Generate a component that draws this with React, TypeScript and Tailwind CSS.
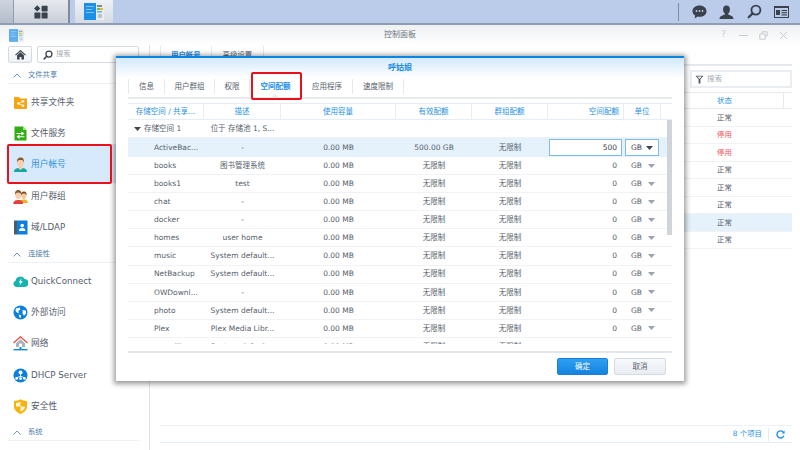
import type { ReactNode } from "react";

const font = "font-['DejaVu_Sans','Noto_Sans_CJK_SC',sans-serif]";

function CpIcon({ className }: { className: string }) {
  return (
    <svg viewBox="0 0 20 17" className={className}>
      <rect x="0" y="0" width="12" height="17" fill="#1c8fe6" />
      <rect x="2" y="3" width="8" height="1" fill="#7cc4f5" />
      <rect x="2" y="6" width="6" height="1" fill="#7cc4f5" />
      <rect x="2" y="9" width="8" height="1" fill="#7cc4f5" />
      <rect x="12" y="0" width="8" height="17" fill="#e9edf0" />
      <rect x="13" y="2" width="5" height="2" fill="#7a8a96" />
      <rect x="13" y="5" width="3" height="2" fill="#6cc04a" />
      <rect x="16" y="5" width="3" height="2" fill="#e9b93c" />
      <rect x="13" y="8" width="5" height="1.5" fill="#6aaedb" />
      <circle cx="16" cy="13" r="2.2" fill="#b8c2ca" />
    </svg>
  );
}

function Magnifier({ className, color = "#39424d" }: { className: string; color?: string }) {
  return (
    <svg viewBox="0 0 16 16" className={className}>
      <circle cx="9.5" cy="6.5" r="4.8" fill="none" stroke={color} strokeWidth="2" />
      <path d="M6 10 L1.8 14.2" stroke={color} strokeWidth="2.4" strokeLinecap="round" />
    </svg>
  );
}

const sideIcons: Record<string, ReactNode> = {
  folder: (
    <svg viewBox="0 0 15 15" className="w-[15px] h-[15px]">
      <path d="M1 2 h5 l1.5 1.5 H14 V13 a1 1 0 0 1 -1 1 H2 a1 1 0 0 1 -1 -1 Z" fill="#f5a612" />
      <circle cx="5.5" cy="8.5" r="1.2" fill="#fff" />
      <circle cx="10" cy="6.2" r="1.2" fill="#fff" />
      <circle cx="10" cy="10.8" r="1.2" fill="#fff" />
      <path d="M5.5 8.5 L10 6.2 M5.5 8.5 L10 10.8" stroke="#fff" strokeWidth="0.8" />
    </svg>
  ),
  file: (
    <svg viewBox="0 0 15 15" className="w-[15px] h-[15px]">
      <path d="M1.5 0.5 H10 L13.5 4 V14.5 H1.5 Z" fill="#2fae12" />
      <path d="M10 0.5 L13.5 4 H10 Z" fill="#a5e08a" />
      <path d="M3.5 7.5 H10 M8.5 6 L10.5 7.5 L8.5 9" stroke="#fff" strokeWidth="1.1" fill="none" />
      <path d="M11.5 10.8 H5 M6.5 9.3 L4.5 10.8 L6.5 12.3" stroke="#fff" strokeWidth="1.1" fill="none" />
    </svg>
  ),
  user: (
    <svg viewBox="0 0 15 15" className="w-[15px] h-[15px]">
      <path d="M1 15 C1 11.5 4 11 7.5 11 C11 11 14 11.5 14 15 Z" fill="#14a8a0" />
      <path d="M5.8 10 H9.2 V12 L7.5 13 L5.8 12 Z" fill="#f3c8a4" />
      <ellipse cx="7.5" cy="5.6" rx="3.3" ry="4.4" fill="#f6cfae" />
      <path d="M4 5.5 C3.6 1.6 6 0.5 7.5 0.5 C9.5 0.5 11.4 1.8 11 5.5 C10.4 3.6 9.6 3 7.5 3 C5.4 3 4.6 3.6 4 5.5 Z" fill="#8a5a2c" />
    </svg>
  ),
  group: (
    <svg viewBox="0 0 15 15" className="w-[15px] h-[15px]">
      <path d="M7 14 C7 11 9 10.5 11 10.5 C13 10.5 14.8 11 14.8 14 Z" fill="#eeb21c" />
      <ellipse cx="10.8" cy="6.6" rx="2.6" ry="3.4" fill="#f2c9a6" />
      <path d="M8 6.5 C7.6 3 10 2.4 11 2.4 C12.4 2.4 14 3.4 13.5 6.5 C13 5 12 4.6 10.8 4.6 C9.6 4.6 8.6 5 8 6.5 Z" fill="#7a4a22" />
      <path d="M0.3 15 C0.3 11.5 3 11 5.5 11 C8 11 10 11.5 10 15 Z" fill="#e2423c" />
      <ellipse cx="5.2" cy="6" rx="3" ry="4" fill="#f6cfae" />
      <path d="M2 6 C1.6 1.8 4 1 5.2 1 C7 1 8.8 2 8.4 6 C8 4.2 7 3.4 5.2 3.4 C3.4 3.4 2.4 4.2 2 6 Z" fill="#8a5a2c" />
    </svg>
  ),
  book: (
    <svg viewBox="0 0 15 15" className="w-[15px] h-[15px]">
      <rect x="1" y="0.5" width="3" height="14" fill="#4d5a68" />
      <rect x="4" y="0.5" width="10.5" height="14" fill="#0b80de" />
      <circle cx="9.2" cy="5.6" r="1.8" fill="#fff" />
      <path d="M6 11 C6 8.6 7.6 8 9.2 8 C10.8 8 12.4 8.6 12.4 11 Z" fill="#fff" />
    </svg>
  ),
  quick: (
    <svg viewBox="0 0 15 15" className="w-[15px] h-[15px]">
      <path d="M3.5 13 A3.2 3.2 0 0 1 2.6 6.8 A4.8 4.8 0 0 1 11.5 5 A4 4 0 0 1 11.5 13 Z" fill="#15b3b0" />
      <path d="M8.4 4 L5.8 8.6 H7.6 L6.6 11.6 L9.8 7.2 H7.9 Z" fill="#fff" />
    </svg>
  ),
  globe: (
    <svg viewBox="0 0 15 15" className="w-[15px] h-[15px]">
      <circle cx="7.5" cy="7.5" r="7" fill="#0b80de" />
      <path d="M3 3.6 L6.6 2.4 L7.4 4.6 L5.4 6 L5.8 8.2 L4.2 7.8 L2.4 5.8 Z" fill="#fff" />
      <path d="M9.6 5 L12.8 5.6 L13 8.6 L11 10.8 L9.6 8.6 Z" fill="#fff" />
      <path d="M5.8 9.6 L8 10.2 L7.8 13 L6.4 12.6 Z" fill="#fff" />
    </svg>
  ),
  net: (
    <svg viewBox="0 0 15 15" className="w-[15px] h-[15px]">
      <path d="M0.6 7 L7.5 0.8 L14.4 7" fill="none" stroke="#e4534a" strokeWidth="1.4" />
      <path d="M3 7.2 L7.5 3.2 L12 7.2 V11 H3 Z" fill="#a7b3bd" />
      <rect x="6" y="7.6" width="3" height="3.4" fill="#fff" />
      <rect x="6.5" y="11" width="2" height="2" fill="#1487de" />
      <rect x="0.5" y="13" width="14" height="1.4" fill="#1487de" />
    </svg>
  ),
  dhcp: (
    <svg viewBox="0 0 15 15" className="w-[15px] h-[15px]">
      <circle cx="7.5" cy="7.5" r="7" fill="#0b80de" />
      <circle cx="7.5" cy="4.6" r="2" fill="#fff" />
      <path d="M7.5 6 V9.4 M3.8 9.8 L7.5 8 L11.2 9.8" stroke="#fff" strokeWidth="0.8" fill="none" />
      <circle cx="3.6" cy="10.4" r="1.4" fill="#fff" />
      <circle cx="7.5" cy="10.6" r="1.4" fill="#fff" />
      <circle cx="11.4" cy="10.4" r="1.4" fill="#fff" />
    </svg>
  ),
  shield: (
    <svg viewBox="0 0 15 15" className="w-[15px] h-[15px]">
      <path d="M1 2 C3.5 2 5.5 1.4 7.5 0.3 C9.5 1.4 11.5 2 14 2 V7.5 C14 11 11 13.6 7.5 15 C4 13.6 1 11 1 7.5 Z" fill="#f6b20e" />
      <path d="M7.5 2.8 V7.5 H3 V3.9 C4.8 3.8 6.2 3.4 7.5 2.8 Z" fill="#fff6d8" />
      <path d="M7.5 7.5 H12 C12 10 10 11.6 7.5 12.8 Z" fill="#fff6d8" />
    </svg>
  ),
};

type SideItem = { icon: string; label: string; active?: boolean };

function SectionHead({ label, className }: { label: string; className: string }) {
  return (
    <div className={`flex items-center gap-[7px] pl-[5px] pt-[3px] border-b border-[#eef1f5] text-[7.3px] text-[#4b7ba8] ${className}`}>
      <svg viewBox="0 0 8 5" className="w-[8px] h-[5px]">
        <path d="M0.5 4.5 L4 1 L7.5 4.5" fill="none" stroke="#5f8db8" strokeWidth="0.9" />
      </svg>
      {label}
    </div>
  );
}

function SideRow({ icon, label, active }: SideItem) {
  return (
    <div className="relative flex items-center h-[31.2px] pl-[5px] pt-[2px] gap-[3px]">
      {active && <div className="absolute inset-x-0 -top-[4px] -bottom-[3px] bg-[#d7eafb]" />}
      <div className="relative">{sideIcons[icon]}</div>
      <span className={`relative text-[8.7px] ${active ? "text-[#2f8fdc]" : "text-[#55606b]"}`}>{label}</span>
    </div>
  );
}

function Sidebar() {
  return (
    <aside className="w-[150px] shrink-0 border-r border-[#dfe3e8] pl-[8px] pr-[10px] pt-[1px]">
      <div className="flex gap-[5px] h-[17px]">
        <div className="w-[24px] flex items-center justify-center rounded-[2px] border border-[#d5dae0] bg-gradient-to-b from-white to-[#eef1f4]">
          <svg viewBox="0 0 12 11" className="w-[11px] h-[10px]">
            <path d="M0.5 5.6 L6 0.8 L11.5 5.6" fill="none" stroke="#3d4650" strokeWidth="1.3" />
            <path d="M2.2 5.8 L6 2.6 L9.8 5.8 V10.5 H7 V7.6 H5 V10.5 H2.2 Z" fill="#3d4650" />
          </svg>
        </div>
        <div className="flex-1 flex items-center gap-[3px] pl-[5px] border border-[#d5dae0] rounded-[2px] text-[7.3px] text-[#a5acb4]">
          <Magnifier className="w-[10px] h-[10px]" />
          搜索
        </div>
      </div>
      <SectionHead label="文件共享" className="h-[19px] mt-[2px] mb-[2px]" />
      {[
        { icon: "folder", label: "共享文件夹" },
        { icon: "file", label: "文件服务" },
        { icon: "user", label: "用户帐号", active: true },
        { icon: "group", label: "用户群组" },
        { icon: "book", label: "域/LDAP" },
      ].map((i) => (
        <SideRow key={i.label} {...i} />
      ))}
      <SectionHead label="连接性" className="h-[18px] mt-[3px] mb-[2px]" />
      {[
        { icon: "quick", label: "QuickConnect" },
        { icon: "globe", label: "外部访问" },
        { icon: "net", label: "网络" },
        { icon: "dhcp", label: "DHCP Server" },
        { icon: "shield", label: "安全性" },
      ].map((i) => (
        <SideRow key={i.label} {...i} />
      ))}
      <SectionHead label="系统" className="h-[18px] mt-[2px]" />
    </aside>
  );
}

const statusRows = ["正常", "停用", "停用", "正常", "正常", "正常", "正常", "正常"];

function UserPanel() {
  return (
    <main className="flex-1 min-w-0 flex flex-col pl-[10px] pr-[8px] pt-[1px] text-[7.4px]">
      <div className="flex h-[20px] border-b-2 border-[#e6e9ed] shrink-0">
        <div className="border-l border-[#e6e9ed] px-[10px] pt-[3px] font-bold text-[#1c8fe6]">用户帐号</div>
        <div className="border-x border-[#e6e9ed] px-[11px] pt-[3px] text-[#55606b]">高级设置</div>
      </div>
      <div className="h-[26px] flex items-center justify-end shrink-0">
        <div className="w-[102px] h-[18px] flex items-center gap-[3px] pl-[3px] border-2 border-[#eaedf1] text-[#a5acb4]">
          <svg viewBox="0 0 10 10" className="w-[9px] h-[9px]">
            <path d="M0.5 0.8 H9.5 L6 4.6 V9.5 H4 V4.6 Z M2.4 1.8 L4.8 4.2 H5.2 L7.6 1.8 Z" fill="#4a535d" fillRule="evenodd" />
          </svg>
          搜索
        </div>
      </div>
      <div className="h-[17px] flex items-center border-y border-[#e6e9ed] shrink-0">
        <div className="ml-auto w-[66px] flex justify-start text-[#1c8fe6]">状态</div>
        <div className="w-[9px] h-full border-l border-[#e6e9ed]" />
      </div>
      <div className="flex-1">
        {statusRows.map((s, i) => (
          <div
            key={i}
            className={`h-[17.5px] flex items-center border-b border-[#f0f2f5] ${i === 6 ? "bg-[#e5f2fc]" : ""}`}
          >
            <div className={`ml-[557px] ${s === "停用" ? "text-[#f0525a]" : "text-[#55606b]"}`}>{s}</div>
          </div>
        ))}
      </div>
      <div className="h-[18px] mb-[7px] flex items-center justify-end border-y border-[#eef1f5] border-b-[#e2edf7] text-[#1c8fe6] shrink-0">
        <span className="pr-[6px]">8 个项目</span>
        <div className="h-[13px] w-[24px] flex items-center justify-center border-l border-[#e6e9ed]">
          <svg viewBox="0 0 10 10" className="w-[9px] h-[9px]">
            <path d="M8.6 3 A4 4 0 1 0 8.8 6.4" fill="none" stroke="#1c8fe6" strokeWidth="1.5" />
            <path d="M9.6 0.6 V4 H6.2 Z" fill="#1c8fe6" />
          </svg>
        </div>
      </div>
    </main>
  );
}

const quotaRows = [
  ["books", "图书管理系统"],
  ["books1", "test"],
  ["chat", "-"],
  ["docker", "-"],
  ["homes", "user home"],
  ["music", "System default..."],
  ["NetBackup", "System default..."],
  ["OWDownl...", "-"],
  ["photo", "System default..."],
  ["Plex", "Plex Media Libr..."],
];

const cols = "grid grid-cols-[76px_77px_115px_76px_76px_76px_37px_11px]";

function Caret({ dark }: { dark?: boolean }) {
  return (
    <svg viewBox="0 0 7 4" className="w-[7px] h-[4px]">
      <path d="M0 0 H7 L3.5 4 Z" fill={dark ? "#3d4650" : "#9aa3ac"} />
    </svg>
  );
}

function QuotaDialog() {
  const heads = ["存储空间 / 共享...", "描述", "使用容量", "有效配额", "群组配额", "空间配额", "单位"];
  const tabs = ["信息", "用户群组", "权限", "空间配额", "应用程序", "速度限制"];
  const tabW = ["w-[36px]", "w-[50px]", "w-[35px]", "w-[52px]", "w-[51px]", "w-[51px]"];
  return (
    <div className="absolute left-[116px] top-[56px] w-[568px] h-[325px] bg-white border-t-2 border-[#0a86e0] shadow-[0_1px_5px_2px_rgba(0,0,0,0.4)] text-[7.5px] text-[#55606b]">
      <div className="h-[20px] flex items-center justify-center font-bold text-[8px] text-[#1c8fe6] bg-gradient-to-b from-[#d3e9fb] to-white">
        呼姑娘
      </div>
      <div className="mx-[12px]">
        <div className="relative flex h-[19px] border-b-2 border-[#e8eaed] box-content">
          {tabs.map((t, i) => (
            <div
              key={t}
              className={`${tabW[i]} flex items-center justify-center border-l border-[#e6e9ed] h-[15px] mt-[1px] ${
                i === 3 ? "font-bold text-[#1c8fe6]" : ""
              }`}
            >
              {t}
            </div>
          ))}
          <div className="w-0 h-[15px] mt-[1px] border-l border-[#e6e9ed]" />
          <div className="absolute left-[144px] bottom-0 w-[6px] h-[3px] bg-[#e8eaed] [clip-path:polygon(50%_0,100%_100%,0_100%)]" />
        </div>
        <div className={`${cols} h-[17px] mt-[4px] border-y border-[#e6edf5] text-[#2a92e2]`}>
          {heads.map((h, i) => (
            <div
              key={h}
              className={`flex items-center border-r border-[#e6edf5] ${
                i === 5 ? "justify-end pr-[4px]" : "justify-center"
              }`}
            >
              {h}
            </div>
          ))}
        </div>
        <div className="relative h-[224px] overflow-hidden">
          <div className="h-[18px] flex items-center border-b border-[#f0f2f5]">
            <div className="w-[16px] flex justify-center pl-[2px]">
              <Caret dark />
            </div>
            <span className="w-[60px]">存储空间 1</span>
            <span className="w-[77px] text-center">位于 存储池 1, S...</span>
          </div>
          <div className={`${cols} h-[19px] items-center bg-[#e5f2fc]`}>
            <div className="pl-[26px]">ActiveBac...</div>
            <div className="text-center">-</div>
            <div className="text-center">0.00 MB</div>
            <div className="text-center">500.00 GB</div>
            <div className="text-center">无限制</div>
            <div className="ml-[1px] mr-[2px] h-[17px] flex items-center justify-end pr-[4px] bg-white border border-[#7fbbe9] text-[#3d4650]">
              500
            </div>
            <div className="ml-[1px] mr-[2px] h-[17px] flex items-center justify-between pl-[5px] pr-[5px] bg-white border border-[#7fbbe9] text-[#3d4650]">
              GB
              <Caret dark />
            </div>
          </div>
          {quotaRows.map(([name, desc]) => (
            <div key={name} className={`${cols} h-[18.1px] items-center border-b border-[#f0f2f5]`}>
              <div className="pl-[26px]">{name}</div>
              <div className="text-center">{desc}</div>
              <div className="text-center">0.00 MB</div>
              <div className="text-center">无限制</div>
              <div className="text-center">无限制</div>
              <div className="text-right pr-[7px]">0</div>
              <div className="flex items-center justify-between pl-[7px] pr-[6px]">
                GB
                <Caret />
              </div>
            </div>
          ))}
          <div className={`${cols} h-[18.1px] items-center`}>
            <div className="pl-[26px]">surveillance</div>
            <div className="text-center">System default...</div>
            <div className="text-center">0.00 MB</div>
            <div className="text-center">无限制</div>
            <div className="text-center">无限制</div>
          </div>
          <div className="absolute right-0 top-0 w-[5px] h-[115px] bg-[#cfd4da]" />
        </div>
        <div className="h-[9px] border-b-2 border-[#e3e6ea]" />
      </div>
      <div className="flex justify-end gap-[6px] pr-[18px] pt-[5px]">
        <div className="w-[51px] h-[17px] flex items-center justify-center rounded-[2px] bg-gradient-to-b from-[#2f9ff0] to-[#1384e0] border border-[#1a82d6] text-white">
          确定
        </div>
        <div className="w-[52px] h-[17px] flex items-center justify-center rounded-[2px] bg-gradient-to-b from-[#f7f9fb] to-[#e9edf2] border border-[#d5dbe2]">
          取消
        </div>
      </div>
    </div>
  );
}

export default function App() {
  return (
    <div className={`relative w-[800px] h-[450px] overflow-hidden bg-white flex flex-col ${font}`}>
      <header className="h-[25px] shrink-0 flex bg-[#bacce9] border-b-2 border-[#8f9db4]">
        <div className="w-[14px] bg-gradient-to-b from-[#cfd5df] to-[#b4bdcb] border-r border-[#8f9db4]" />
        <div className="w-[56px] flex items-center justify-center bg-gradient-to-b from-[#e6e9ee] to-[#c9cfd9] border-r-2 border-[#7f8a9b]">
          <svg viewBox="0 0 14 14" className="w-[14px] h-[14px]">
            <path d="M3.2 0.2 L6.4 3.4 L3.2 6.6 L0 3.4 Z" fill="#39424d" />
            <rect x="7.6" y="0.8" width="6" height="5.6" rx="0.6" fill="#39424d" />
            <rect x="0.4" y="7.6" width="6" height="6" rx="0.6" fill="#39424d" />
            <rect x="7.6" y="7.6" width="6" height="6" rx="0.6" fill="#39424d" />
          </svg>
        </div>
        <div className="w-[38px] ml-[5px] flex items-center justify-center bg-gradient-to-b from-[#eef1f5] to-[#d5dbe5]">
          <CpIcon className="w-[20px] h-[17px]" />
        </div>
        <div className="ml-auto flex items-center h-full">
          <div className="h-[18px] border-l border-[#7f8a9b]" />
          <div className="w-[121px] pl-[13px] pr-[11px] flex items-center justify-between">
            <svg viewBox="0 0 15 14" className="w-[15px] h-[14px]">
              <path d="M7.5 0.5 C11.6 0.5 14.5 3 14.5 6.2 C14.5 9.4 11.6 11.8 7.5 11.8 C6.8 11.8 6.2 11.7 5.6 11.6 L2.6 13.6 L3.2 10.6 C1.5 9.5 0.5 8 0.5 6.2 C0.5 3 3.4 0.5 7.5 0.5 Z" fill="#39424d" />
              <circle cx="4.5" cy="6" r="0.9" fill="#bacce9" />
              <circle cx="7.5" cy="6" r="0.9" fill="#bacce9" />
              <circle cx="10.5" cy="6" r="0.9" fill="#bacce9" />
            </svg>
            <svg viewBox="0 0 15 14" className="w-[15px] h-[14px]">
              <ellipse cx="7.5" cy="4.6" rx="3.4" ry="4.2" fill="#39424d" />
              <path d="M0.5 14 C0.5 11 3.5 10.6 5.5 9.8 L6 8 H9 L9.5 9.8 C11.5 10.6 14.5 11 14.5 14 Z" fill="#39424d" />
            </svg>
            <Magnifier className="w-[15px] h-[15px]" />
            <svg viewBox="0 0 15 12" className="w-[15px] h-[12px]">
              <rect x="0.5" y="0.5" width="14" height="11" fill="none" stroke="#39424d" strokeWidth="1" />
              <rect x="0" y="0" width="15" height="2" fill="#39424d" />
              <rect x="2" y="4" width="4" height="5" fill="#39424d" />
              <rect x="7.5" y="4" width="5.5" height="1.1" fill="#39424d" />
              <rect x="7.5" y="6.2" width="5.5" height="1.1" fill="#39424d" />
              <rect x="7.5" y="8.4" width="5.5" height="1.1" fill="#39424d" />
            </svg>
          </div>
        </div>
      </header>

      <div className="relative h-[20px] shrink-0 flex items-center justify-center bg-gradient-to-b from-[#eef0f2] to-white text-[8px] text-[#6b7680]">
        <CpIcon className="absolute left-[9px] top-[4px] w-[15px] h-[13px] opacity-70" />
        控制面板
        <div className="absolute right-[12px] top-0 h-full flex items-center gap-[11px] text-[#c6ccd2]">
          <span className="w-[9px] text-center text-[8px]">?</span>
          <span className="w-[9px] h-px bg-[#c6ccd2]" />
          <svg viewBox="0 0 9 9" className="w-[9px] h-[9px]">
            <path d="M3 2.5 V0.8 H8.2 V5 H6.2 M0.8 3 H6.2 V8.2 H0.8 Z" fill="none" stroke="#c6ccd2" strokeWidth="1" />
          </svg>
          <svg viewBox="0 0 9 9" className="w-[9px] h-[9px]">
            <path d="M1 1 L8 8 M8 1 L1 8" stroke="#c6ccd2" strokeWidth="1" />
          </svg>
        </div>
      </div>

      <div className="flex-1 min-h-0 flex">
        <Sidebar />
        <UserPanel />
      </div>

      <QuotaDialog />

      <div className="absolute left-[7px] top-[144px] w-[105px] h-[40px] rounded-[2px] border-2 border-[#e8101a]" />
      <div className="absolute left-[251px] top-[72px] w-[51px] h-[28px] rounded-[2px] border-2 border-[#e8101a]" />
    </div>
  );
}
